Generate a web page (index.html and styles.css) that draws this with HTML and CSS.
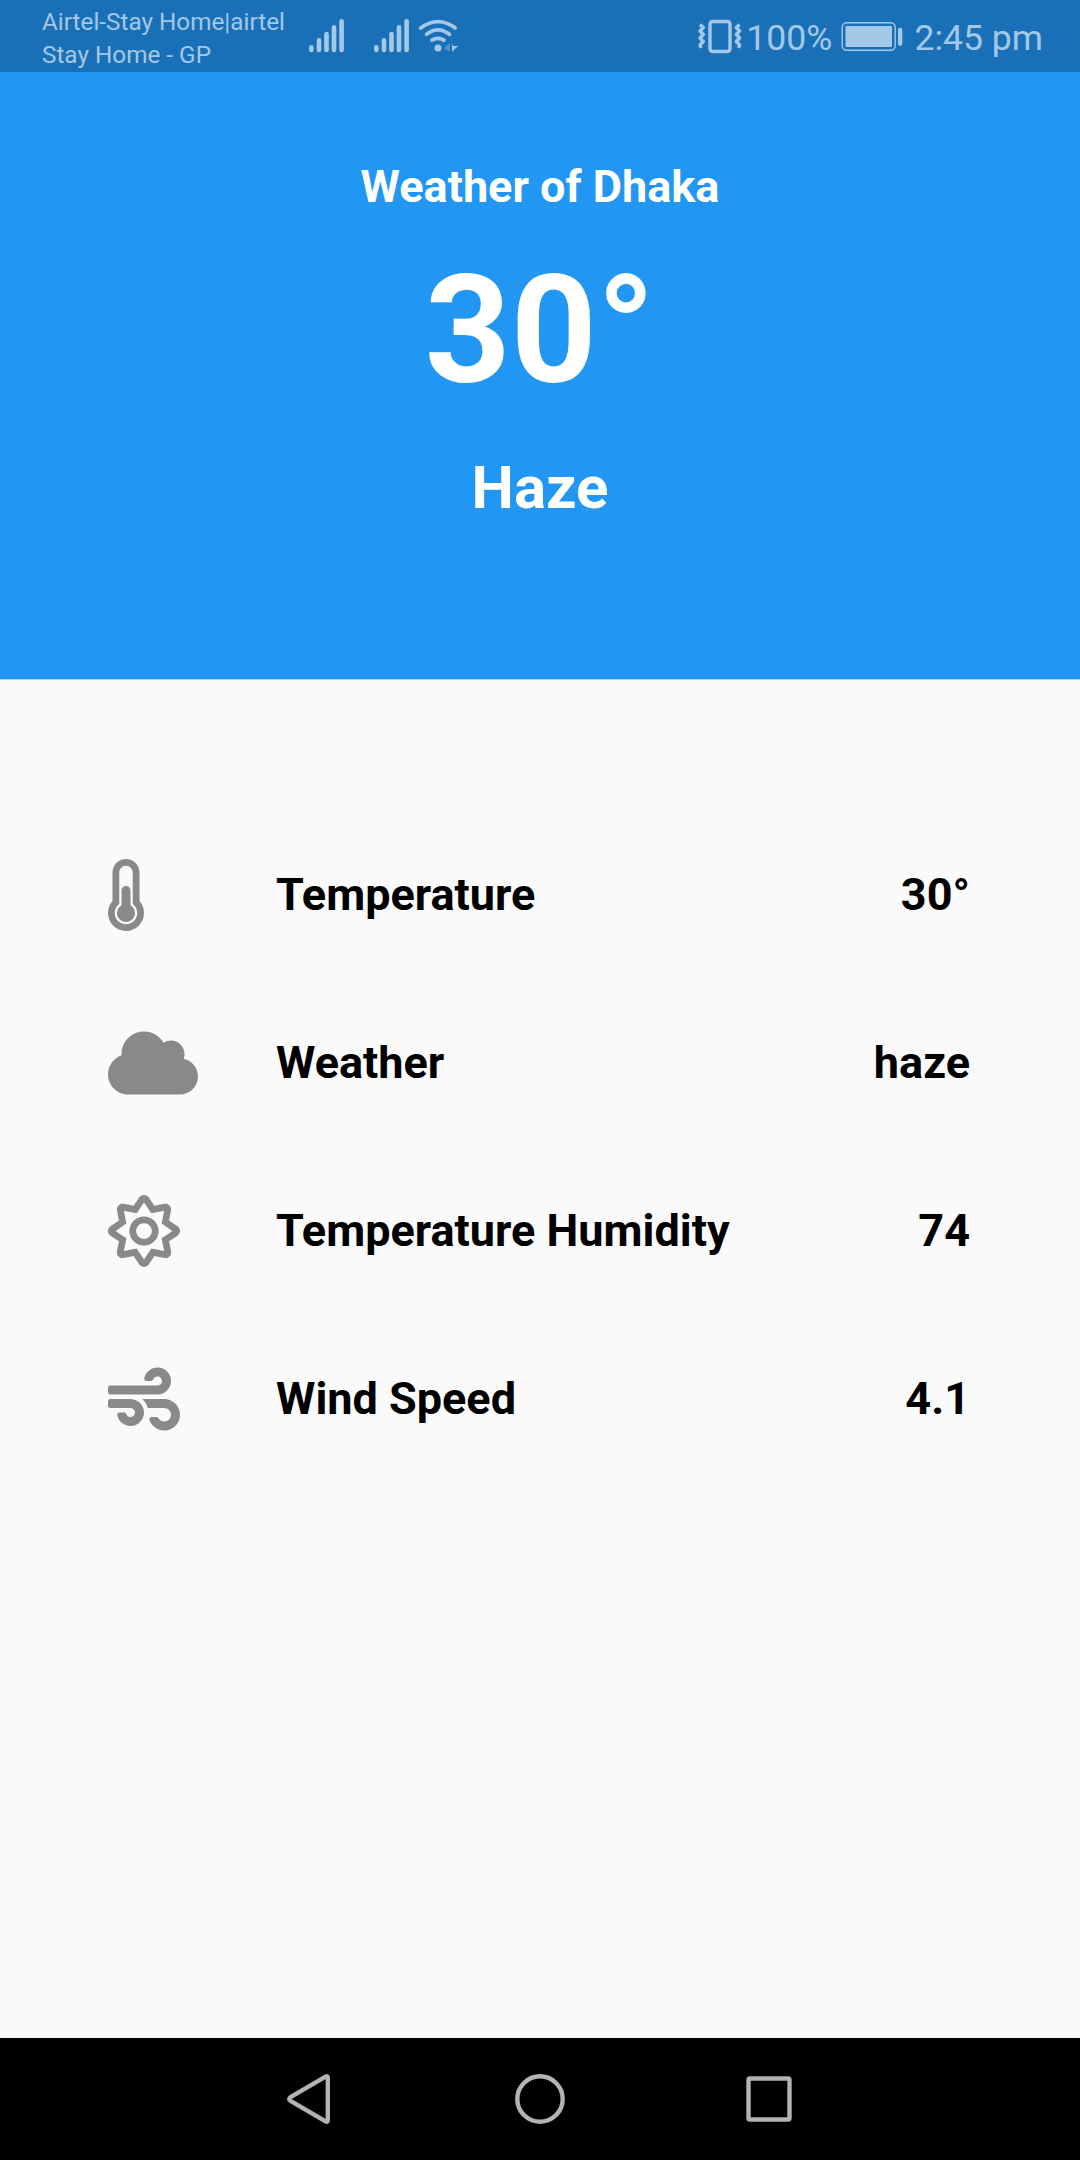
FILE: index.html
```html
<!DOCTYPE html>
<html lang="en">
<head>
<meta charset="utf-8">
<title>Weather of Dhaka</title>
<link rel="stylesheet" href="styles.css">
</head>
<body>
<div class="screen">
  <div class="status-bar">
    <div class="carrier">Airtel-Stay Home|airtel<br>Stay Home - GP</div>
    <svg class="signals" width="150" height="72" viewBox="0 0 150 72">
      <g stroke="currentColor" stroke-width="4.6" stroke-linecap="round">
        <path d="M5.3 47.3v2.6M13 40.3v9.6M20.5 34v15.9M28 27.3v22.6M35.6 21.3v28.6"/>
        <path d="M70.3 47.3v2.6M78 40.3v9.6M85.5 34v15.9M93 27.3v22.6M100.6 21.3v28.6"/>
      </g>
      <g fill="none" stroke="currentColor" stroke-width="3.7" stroke-linecap="round">
        <path d="M114.700 28Q132 15.200 149.300 28"/>
        <path d="M120.600 34.300Q132 25.500 143.400 34.300"/>
        <path d="M126 40.200Q132 36.600 138 40.200"/>
      </g>
      <circle cx="132" cy="48" r="3.500" fill="currentColor"/>
      <path d="M137.800 48.500l6.200-6v9z" fill="currentColor" opacity=".4"/>
      <path d="M146 42.500l1 3.500h5.200l-3.300 3-2.900 3z" fill="currentColor"/>
    </svg>
    <div class="spacer"></div>
    <svg class="vibrate" width="44" height="72" viewBox="0 0 44 72">
      <rect x="12" y="21.500" width="20" height="30" rx="2.800" fill="none" stroke="currentColor" stroke-width="3.400"/>
      <g fill="none" stroke="currentColor" stroke-width="3.400" stroke-linejoin="round">
        <path d="M2 24.500l3.300 3-3.300 3.500 3.300 3.500-3.300 3.500 3.300 3.500-3.300 3.500 1 3"/>
        <path d="M41.600 24.500l-3.300 3 3.300 3.500-3.300 3.500 3.300 3.500-3.300 3.500 3.300 3.500-1 3"/>
      </g>
    </svg>
    <span class="status-text battery-level">100%</span>
    <svg class="battery" width="62" height="72" viewBox="0 0 62 72">
      <rect x="1.200" y="22.800" width="53" height="27.500" rx="4.500" fill="none" stroke="currentColor" stroke-width="1.400"/>
      <rect x="4.500" y="26" width="46.500" height="21" rx="1" fill="currentColor"/>
      <rect x="57" y="27.700" width="4.300" height="18" rx="1.800" fill="currentColor"/>
    </svg>
    <span class="status-text clock">2:45 pm</span>
  </div>

  <header class="summary">
    <div class="city">Weather of Dhaka</div>
    <div class="degrees">30°</div>
    <div class="condition">Haze</div>
  </header>

  <main class="details">
    <div class="row">
      <svg class="icon" height="72" width="36" viewBox="0 0 256 512"><path d="M192 384c0 35.346-28.654 64-64 64s-64-28.654-64-64c0-23.685 12.876-44.349 32-55.417V224c0-17.673 14.327-32 32-32s32 14.327 32 32v104.583c19.124 11.068 32 31.732 32 55.417zm32-84.653c19.912 22.563 32 52.194 32 84.653 0 70.696-57.303 128-128 128-.299 0-.609-.001-.909-.003C56.789 511.509-.357 453.636.002 383.333.166 351.135 12.240 321.755 32 299.347V96c0-53.019 42.981-96 96-96s96 42.981 96 96v203.347zM208 384c0-34.339-19.370-52.190-32-66.502V96c0-26.467-21.533-48-48-48S80 69.533 80 96v221.498c-12.732 14.428-31.825 32.100-31.999 66.080-.224 43.876 35.563 80.116 79.423 80.420L128 464c44.112 0 80-35.888 80-80z"/></svg>
      <span class="label">Temperature</span>
      <span class="value">30°</span>
    </div>
    <div class="row">
      <svg class="icon" height="72" width="90" viewBox="0 0 640 512"><path d="M537.600 226.600c4.100-10.700 6.400-22.400 6.400-34.600 0-53-43-96-96-96-19.700 0-38.100 6-53.300 16.200C367 64.200 315.300 32 256 32c-88.400 0-160 71.600-160 160 0 2.700.1 5.400.2 8.100C40.200 219.800 0 273.200 0 336c0 79.500 64.500 144 144 144h368c70.700 0 128-57.300 128-128 0-61.900-44-113.600-102.400-125.400z"/></svg>
      <span class="label">Weather</span>
      <span class="value">haze</span>
    </div>
    <div class="row">
      <svg class="icon" height="72" width="72" viewBox="0 0 512 512"><path d="M494.200 221.900l-59.800-40.500 13.700-71c2.600-13.200-1.600-26.800-11.100-36.400-9.600-9.500-23.200-13.700-36.200-11.100l-70.900 13.700-40.400-59.900c-15.100-22.300-51.900-22.300-67 0l-40.400 59.900-70.800-13.700C98 60.400 84.500 64.500 75 74.100c-9.500 9.600-13.700 23.100-11.100 36.300l13.700 71-59.800 40.500C6.600 229.500 0 242 0 255.500s6.700 26 17.800 33.500l59.800 40.500-13.700 71c-2.600 13.200 1.600 26.800 11.100 36.300 9.500 9.500 22.900 13.700 36.300 11.100l70.800-13.700 40.400 59.900C230 505.300 242.600 512 256 512s26-6.700 33.500-17.800l40.400-59.900 70.900 13.700c13.400 2.700 26.800-1.600 36.300-11.100 9.500-9.500 13.600-23.100 11.100-36.300l-13.700-71 59.800-40.500c11.100-7.500 17.800-20.100 17.800-33.500-.1-13.600-6.700-26.100-17.900-33.700zm-112.900 85.600l17.600 91.200-91-17.600L256 458l-51.900-77-90.900 17.600 17.600-91.200-76.800-52 76.800-52-17.600-91.200 91 17.600L256 53l51.900 76.900 91-17.600-17.600 91.100 76.800 52-76.800 52.100zM256 152c-57.300 0-104 46.700-104 104s46.700 104 104 104 104-46.700 104-104-46.700-104-104-104zm0 160c-30.900 0-56-25.100-56-56s25.100-56 56-56 56 25.100 56 56-25.100 56-56 56z"/></svg>
      <span class="label">Temperature Humidity</span>
      <span class="value">74</span>
    </div>
    <div class="row">
      <svg class="icon" height="72" width="72" viewBox="0 0 512 512"><path d="M156.700 256H16c-8.800 0-16 7.200-16 16v32c0 8.800 7.200 16 16 16h142.200c15.900 0 30.800 10.900 33.400 26.600 3.300 20-12.100 37.400-31.600 37.400-14.100 0-26.100-9.200-30.400-21.900-2.100-6.300-8.600-10.100-15.200-10.100H81.600c-9.800 0-17.700 8.800-15.900 18.400 8.600 44.100 47.600 77.600 94.200 77.600 57.100 0 102.700-50.100 95.200-108.600C249 291 205.400 256 156.700 256zM16 224h336c59.700 0 106.800-54.800 93.800-116.700-7.600-36.200-36.900-65.500-73.100-73.100-55.400-11.600-105.100 24.900-114.900 75.500-1.900 9.600 6.100 18.300 15.800 18.300h32.800c6.700 0 13.100-3.800 15.200-10.100C325.900 105.200 337.900 96 352 96c19.400 0 34.900 17.400 31.600 37.400-2.600 15.700-17.400 26.600-33.400 26.600H16c-8.800 0-16 7.200-16 16v32c0 8.800 7.200 16 16 16zm384 32H243.700c19.300 16.600 33.200 38.800 39.800 64H400c26.500 0 48 21.500 48 48s-21.500 48-48 48c-17.900 0-33.300-9.900-41.600-24.400-2.900-5-8.700-7.600-14.500-7.600h-33.800c-10.900 0-19 10.800-15.300 21.100 17.800 50.600 70.500 84.800 129.400 72.300 41.200-8.700 75.100-41.600 84.700-82.700C526 321.500 470.500 256 400 256z"/></svg>
      <span class="label">Wind Speed</span>
      <span class="value">4.1</span>
    </div>
  </main>

  <nav class="nav-bar">
    <svg width="54" height="54" viewBox="0 0 54 54"><path d="M41.600 4.600Q43.800 3.500 43.800 6V48Q43.800 50.500 41.600 49.400L6.500 28.800Q4 27 6.500 25.200Z"/></svg>
    <svg width="54" height="54" viewBox="0 0 54 54"><circle cx="27" cy="27" r="22.700"/></svg>
    <svg width="54" height="54" viewBox="0 0 54 54"><rect x="6.500" y="6.500" width="41" height="41" rx="1.500"/></svg>
  </nav>
</div>
</body>
</html>
```
FILE: styles.css
```css
* { box-sizing: border-box; }

body {
  margin: 0;
  font-family: Roboto, sans-serif;
}

svg { display: block; flex: none; }

.screen {
  display: flex;
  flex-direction: column;
  width: 1080px;
  height: 2160px;
  background: #fafafa;
}

.status-bar {
  display: flex;
  align-items: center;
  height: 72px;
  padding: 0 37px 0 42px;
  background: #1a70b7;
  color: #a3c8e8;
  white-space: nowrap;
}

.carrier {
  width: 264px;
  font-size: 24.3px;
  line-height: 33px;
  padding-top: 4px;
}

.signals { overflow: visible; }

.spacer { flex: 1; }

.vibrate { margin-right: 4px; }

.status-text {
  font-size: 35.6px;
  line-height: 42px;
  padding-top: 4px;
}

.battery { margin: 0 11px 0 9px; }

.summary {
  display: flex;
  flex-direction: column;
  align-items: center;
  height: 608px;
  padding-top: 88px;
  background: #2196f3;
  border-bottom: 1px solid #a6dafa;
  color: #fff;
  font-weight: 700;
}

.city {
  font-size: 45px;
  line-height: 53px;
}

.degrees {
  margin-top: 30px;
  font-size: 150px;
  line-height: 176px;
}

.condition {
  margin-top: 34px;
  font-size: 60px;
  line-height: 70px;
}

.details {
  flex: 1;
  display: flex;
  flex-direction: column;
  padding: 131px 110px 0 108px;
}

.row {
  display: grid;
  grid-template-columns: 168px 1fr auto;
  align-items: center;
  height: 168px;
  font-size: 45px;
  font-weight: 700;
  color: #000;
}

.label,
.value {
  padding-bottom: 2px;
}

.icon { fill: #898989; }

.nav-bar {
  display: flex;
  align-items: center;
  justify-content: center;
  gap: 175px;
  height: 122px;
  background: #000;
}

.nav-bar svg {
  fill: none;
  stroke: #b3b3b3;
  stroke-width: 4.4;
  stroke-linejoin: round;
}
```
